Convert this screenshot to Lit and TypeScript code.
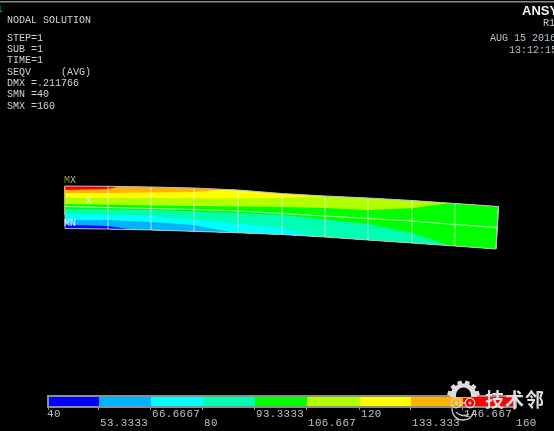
import { LitElement, html, css, svg } from "lit";
import { customElement } from "lit/decorators.js";

const TOP: [number, number][] = [[65,186],[108,186.3],[151,187],[194,188],[238,190],[282,193.5],[325,196],[368,198],[412,200.5],[455,203.5],[498.5,206.5]];
const BOT: [number, number][] = [[65,228.5],[108,229],[151,230],[194,231.3],[238,232.8],[282,234.5],[325,237],[368,240],[412,243],[455,246],[496,249]];
const MID: [number, number][] = [[65,206.5],[108,207.5],[151,208.5],[194,209.5],[238,211],[282,213.5],[325,216],[368,218.5],[412,221],[455,224.5],[497.5,227.5]];

const pts = (a: [number, number][]) => a.map((p) => p.join(",")).join(" ");
const beam = pts([...TOP, ...[...BOT].reverse()]);

// Contour layers, painted from the top band downward; each one covers all that lies below its boundary.
const LAYERS: { color: string; line: [number, number][] }[] = [
  { color: "#ffb200", line: [[60,190],[108,189],[122,186],[122,170],[520,170]] },
  { color: "#ffff00", line: [[60,193],[108,193],[151,192.5],[194,192],[230,189],[230,170],[520,170]] },
  { color: "#b2ff00", line: [[60,198],[151,198],[238,198.5],[282,198],[332,196],[332,170],[520,170]] },
  { color: "#00ff00", line: [[60,204],[151,205.5],[238,206.5],[282,207],[325,208],[368,210],[412,208.3],[450,203],[450,170],[520,170]] },
  { color: "#00ffb2", line: [[60,209],[151,210],[230,213],[282,215],[325,219.5],[368,224],[412,233],[452,246.5],[452,270],[520,270]] },
  { color: "#00ffff", line: [[60,214],[151,216],[220,222],[282,228],[322,237.5],[322,270],[520,270]] },
  { color: "#00b2ff", line: [[60,220],[108,220],[151,222],[194,225],[235,233],[235,270],[520,270]] },
  { color: "#0000ff", line: [[60,224.5],[108,226],[142,231],[142,270],[520,270]] },
];

const LEGEND = ["#0000ff","#00b2ff","#00ffff","#00ffb2","#00ff00","#b2ff00","#ffff00","#ffb200","#ff0000"];
const EDGES = [49,99,151,203,255,307,360,411,463,515];
const LABELS = ["40","53.3333","66.6667","80","93.3333","106.667","120","133.333","146.667","160"];
const INFO: [string, number][] = [
  ["NODAL SOLUTION",22.5],["STEP=1",40.5],["SUB =1",51.5],["TIME=1",63],
  ["SEQV     (AVG)",74.5],["DMX =.211766",85.5],["SMN =40",97],["SMX =160",108.5],
];

function gearOutline(): string {
  const cx = 463.5, cy = 397, teeth = 6;
  const out: string[] = [];
  for (let t = 0; t < teeth; t++) {
    const step = Math.PI / teeth;
    const a0 = Math.PI + t * step;
    const seq: [number, number][] = [
      [a0, 13.5], [a0 + step * 0.15, 13.5], [a0 + step * 0.25, 16.5],
      [a0 + step * 0.75, 16.5], [a0 + step * 0.85, 13.5], [a0 + step, 13.5],
    ];
    for (const [a, r] of seq) {
      out.push(`${(cx + r * Math.cos(a)).toFixed(1)},${(cy + r * Math.sin(a)).toFixed(1)}`);
    }
  }
  return out.join(" ");
}

@customElement("app-root")
export class AppRoot extends LitElement {
  static styles = css`
    :host { display: block; width: 554px; height: 431px; background: #000; overflow: hidden; }
    svg { display: block; filter: blur(0.3px); }
    text { font-family: "Liberation Mono", monospace; white-space: pre; }
    .info { font-size: 10px; fill: #d2d2d2; }
    .date { font-size: 10px; fill: #b6c0ce; }
    .num { font-size: 10.8px; letter-spacing: 0.4px; fill: #bcc0c4; }
    .title { font-family: "Liberation Sans", sans-serif; font-weight: 700; font-size: 13px; fill: #f4f4f4; }
    .rev { font-size: 10px; fill: #c8c8c8; }
    .win { font-size: 11px; font-weight: 700; fill: #00a6a0; }
    .tag { font-size: 10px; }
    .mesh { fill: none; stroke: #eaffea; stroke-width: 1; opacity: 0.75; }
    .edge { fill: none; stroke: #b8c0b8; stroke-width: 1; }
    .left { stroke: #a8c040; stroke-width: 1; }
    .cjk { font-family: "Noto Sans CJK SC", sans-serif; font-weight: 700; font-size: 19px; letter-spacing: 1px; fill: #dedede; }
    .gear { fill: #dcdcdc; }
    .hole { fill: #000; }
    .rim { fill: none; stroke: #d8d8d8; stroke-width: 1.3; }
    .smile { fill: none; stroke: #cacaca; stroke-width: 1.3; }
  `;

  render() {
    return html`<svg width="554" height="431" viewBox="0 0 554 431">
      <defs><clipPath id="beam"><polygon points=${beam}></polygon></clipPath></defs>
      <rect x="0" y="1" width="554" height="1.5" fill="#8a8a8a"></rect>
      <text class="win" x="-4" y="12">1</text>
      ${INFO.map(([t, y]) => svg`<text class="info" x="7" y=${y}>${t}</text>`)}
      <text class="title" x="522" y="15">ANSYS</text>
      <text class="rev" x="543" y="26">R17.0</text>
      <text class="date" x="490" y="41">AUG 15 2016</text>
      <text class="date" x="509" y="53">13:12:15</text>

      <g clip-path="url(#beam)">
        <rect x="60" y="180" width="445" height="75" fill="#ff0000"></rect>
        ${LAYERS.map((l) => svg`<polygon fill=${l.color} points=${pts([...l.line, [520, 270], [60, 270]])}></polygon>`)}
      </g>
      ${TOP.slice(1).map((p, i) => svg`<line class="mesh" x1=${p[0]} y1=${p[1]} x2=${BOT[i + 1][0]} y2=${BOT[i + 1][1]}></line>`)}
      <polyline class="mesh" points=${pts(MID)}></polyline>
      <polygon class="edge" points=${beam}></polygon>
      <line class="left" x1="64.500" y1="186" x2="64.500" y2="215"></line>

      <text class="tag" x="64" y="183"><tspan fill="#8c9c34">M</tspan><tspan fill="#b4b4b4">X</tspan></text>
      <text class="tag" x="65" y="204" fill="#c0e850">Z</text>
      <text class="tag" x="86" y="203.500" fill="#fbfff4">X</text>
      <text class="tag" x="64" y="226" fill="#e8f4ff">MN</text>

      <rect x="47" y="395" width="470" height="13" fill="#8e8e8e"></rect>
      ${LEGEND.map((c, i) => svg`<rect x=${EDGES[i]} y="397" width=${EDGES[i + 1] - EDGES[i]} height="9" fill=${c}></rect>`)}
      ${EDGES.map((x) => svg`<rect x=${x - 1} y="408" width="1" height="2" fill="#8e8e8e"></rect>`)}
      ${LABELS.map((t, i) => svg`<text class="num" x=${EDGES[i] + (i === 0 ? -2 : 1)} y=${i % 2 ? 426 : 416.5}>${t}</text>`)}

      <polygon class="gear" points=${gearOutline()}></polygon>
      <path class="hole" d="M456 398v-3a7.500 7.500 0 0 1 15 0v3z"></path>
      <rect x="456" y="397" width="15" height="1" fill="#ffb200"></rect>
      <circle class="rim" cx="456" cy="403" r="4.800"></circle>
      <circle class="rim" cx="470" cy="403" r="4.800"></circle>
      <line class="rim" x1="460.800" y1="403" x2="465.200" y2="403"></line>
      <circle cx="456" cy="403" r="1.500" fill="#d8d8d8"></circle>
      <circle cx="470" cy="403" r="1.500" fill="#d8d8d8"></circle>
      <path class="smile" d="M452 408c0 8 5 12 11 12s10-3 11-10"></path>
      <path class="smile" d="M456 412c2 3 8 5 13 2"></path>
      <text class="cjk" x="485" y="407">技术邻</text>
    </svg>`;
  }
}
